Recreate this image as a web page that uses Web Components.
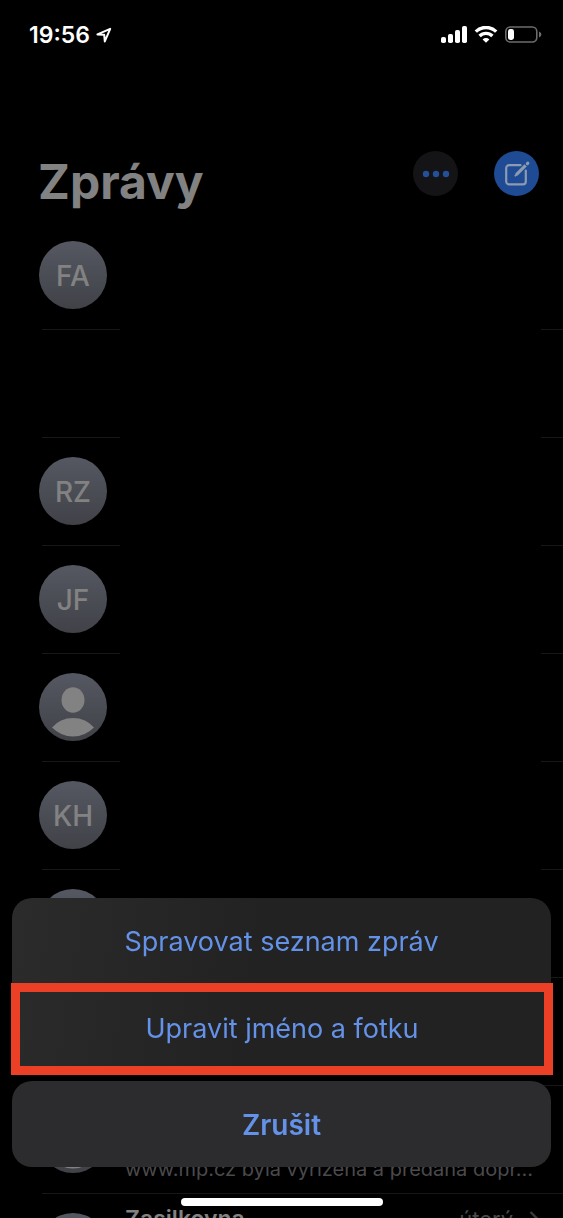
<!DOCTYPE html>
<html lang="cs">
<head>
<meta charset="utf-8">
<meta name="viewport" content="width=device-width, initial-scale=1">
<title>Zprávy</title>
<style>
	body {
		margin: 0;
		background: #000;
		font-family: Inter, "Liberation Sans", sans-serif;
	}
</style>
</head>
<body>
<messages-app>
	<status-bar slot="status" time="19:56"></status-bar>
	<messages-header slot="header">Zprávy</messages-header>

	<message-row initials="FA" masked></message-row>
	<message-row blank masked></message-row>
	<message-row initials="RZ" masked></message-row>
	<message-row initials="JF" masked></message-row>
	<message-row masked></message-row>
	<message-row initials="KH" masked></message-row>
	<message-row masked></message-row>
	<message-row masked></message-row>
	<message-row>
		<span slot="preview">www.mp.cz byla vyřízena a předána dopr…</span>
	</message-row>
	<message-row>
		<span slot="name">Zasilkovna</span>
		<span slot="date">úterý</span>
	</message-row>

	<action-sheet slot="sheet">
		<sheet-action>Spravovat seznam zpráv</sheet-action>
		<sheet-action highlighted>Upravit jméno a fotku</sheet-action>
		<sheet-action slot="cancel" strong>Zrušit</sheet-action>
	</action-sheet>
</messages-app>

<script>
// Shared base: renders a template string into an open shadow root
class BaseElement extends HTMLElement {
	connectedCallback() {
		if (this.shadowRoot) return;
		this.attachShadow({ mode: "open" });
		this.shadowRoot.innerHTML = this.template();
	}
}

class MessagesApp extends BaseElement {
	template() {
		return `
			<style>
				:host {
					display: flex;
					flex-direction: column;
					height: 100vh;
					overflow: hidden;
				}

				main {
					flex: 1;
					min-height: 0;
					overflow: hidden;
				}
			</style>

			<slot name="status"></slot>
			<slot name="header"></slot>
			<main><slot></slot></main>
			<slot name="sheet"></slot>
		`;
	}
}

class StatusBar extends BaseElement {
	template() {
		return `
			<style>
				:host {
					display: flex;
					align-items: center;
					justify-content: space-between;
					height: 69px;
					padding: 0 21px 0 29px;
					color: #fff;
				}

				.group {
					display: flex;
					align-items: center;
					gap: 6px;
				}

				time {
					font-size: 23px;
					font-weight: 600;
				}

				svg {
					display: block;
				}
			</style>

			<div class="group">
				<time>${this.getAttribute("time")}</time>
				<svg width="16" height="16" viewBox="0 0 16 16" fill="none" stroke="#fff" stroke-width="2" stroke-linejoin="round">
					<path d="M14.2 1.8 1.4 7.4 8.2 7.8 8.8 14.4Z"/>
				</svg>
			</div>

			<div class="group">
				<svg width="28" height="18" viewBox="0 0 28 18" fill="#fff">
					<rect x="1" y="11" width="5" height="6" rx="1.8"/>
					<rect x="8" y="8" width="5" height="9" rx="1.8"/>
					<rect x="15" y="4" width="5" height="13" rx="1.8"/>
					<rect x="22" y="0" width="5" height="17" rx="1.8"/>
				</svg>
				<svg width="24" height="18" viewBox="0 0 24 18" fill="none" stroke="#fff" stroke-width="3.4">
					<path d="M1.8 5.6a14.6 14.6 0 0 1 20.4 0"/>
					<path d="M5.6 10a9 9 0 0 1 12.8 0"/>
					<path d="M12 16.8 8.6 13.4a4.8 4.8 0 0 1 6.8 0Z" fill="#fff" stroke="none"/>
				</svg>
				<svg width="38" height="18" viewBox="0 0 38 18">
					<rect x="1.8" y="1" width="31" height="15" rx="4.5" fill="none" stroke="#6c6c6c" stroke-width="1.6"/>
					<rect x="4" y="3" width="6" height="11" rx="2.4" fill="#fff"/>
					<path d="M35 5.6q2.4.8 2.4 2.9t-2.4 2.9Z" fill="#6c6c6c"/>
				</svg>
			</div>
		`;
	}
}

class MessagesHeader extends BaseElement {
	template() {
		return `
			<style>
				:host {
					display: flex;
					align-items: flex-start;
					justify-content: space-between;
					height: 71px;
					padding: 82px 24px 0 38px;
				}

				h1 {
					margin: 0;
					padding-top: 2px;
					font-size: 48px;
					line-height: 58px;
					font-weight: 700;
					color: #828282;
				}

				.buttons {
					display: flex;
					gap: 36px;
				}

				button {
					display: grid;
					place-items: center;
					width: 45px;
					height: 45px;
					padding: 0;
					border: 0;
					border-radius: 50%;
					background: #141416;
				}

				.compose {
					background: #1e4b93;
				}
			</style>

			<h1><slot></slot></h1>
			<div class="buttons">
				<button type="button" aria-label="Další možnosti">
					<svg width="28" height="8" viewBox="0 0 28 8" fill="#235098">
						<circle cx="4" cy="4" r="3.2"/>
						<circle cx="14" cy="4" r="3.2"/>
						<circle cx="24" cy="4" r="3.2"/>
					</svg>
				</button>
				<button type="button" class="compose" aria-label="Nová zpráva">
					<svg width="28" height="28" viewBox="0 0 28 28" fill="none" stroke="#8c9ab2" stroke-linecap="round">
						<path d="M17.5 5.2H6.2A3 3 0 0 0 3.2 8.2V21.4A3 3 0 0 0 6.2 24.4H19.8A3 3 0 0 0 22.8 21.4V10.5" stroke-width="2.2"/>
						<path d="M13.4 14.6 22.6 5.4" stroke-width="3.2" stroke-linecap="butt"/>
						<path d="M24.4 3.6 24.8 3.2" stroke-width="3.2"/>
						<path d="M12.4 15.6 13.8 14.2" stroke-width="2"/>
					</svg>
				</button>
			</div>
		`;
	}
}

class ContactAvatar extends BaseElement {
	template() {
		const initials = this.getAttribute("initials");
		const person = `
			<svg viewBox="0 0 68 68">
				<ellipse cx="34" cy="27" rx="11.5" ry="12.7"/>
				<path d="M13 54.5Q21 45 34 45T55 54.5Q46 63.5 34 63.5T13 54.5Z"/>
			</svg>
		`;

		return `
			<style>
				:host {
					display: grid;
					place-items: center;
					flex: none;
					width: 68px;
					height: 68px;
					border-radius: 50%;
					background: linear-gradient(#555862, #414248);
					color: #828282;
					font-size: 28px;
					font-weight: 500;
				}

				span {
					padding-top: 2px;
				}

				svg {
					display: block;
					width: 68px;
					fill: #828282;
				}
			</style>

			${initials ? `<span>${initials}</span>` : person}
		`;
	}
}

class MessageRow extends BaseElement {
	template() {
		const initials = this.getAttribute("initials") || "";
		const blank = this.hasAttribute("blank");

		return `
			<style>
				:host {
					display: flex;
					flex-direction: column;
					height: 108px;
				}

				.content {
					display: flex;
					align-items: center;
					flex: 1;
					gap: 18px;
					padding: 0 24px 1px 39px;
				}

				.text {
					display: flex;
					flex-direction: column;
					justify-content: space-between;
					flex: 1;
					min-width: 0;
					height: 86px;
					padding-top: 2px;
					font-size: 22px;
					line-height: 28px;
					white-space: nowrap;
					color: #4a4a4c;
				}

				.top {
					display: flex;
					justify-content: space-between;
					min-height: 28px;
				}

				.name {
					font-size: 23px;
					font-weight: 600;
					color: #828282;
				}

				.preview {
					font-size: 20px;
				}

				.date {
					display: flex;
					align-items: center;
					gap: 16px;
				}

				.divider {
					display: flex;
					justify-content: space-between;
					padding-left: 42px;
				}

				.divider i {
					height: 1px;
					background: #171718;
				}

				.divider i:first-child {
					flex: 1;
				}

				:host([masked]) .divider i:first-child {
					flex: none;
					width: 78px;
				}

				:host([masked]) .divider i:last-child {
					width: 22px;
				}
			</style>

			<div class="content">
				${blank ? "" : `<contact-avatar initials="${initials}"></contact-avatar>`}
				${this.hasAttribute("masked") ? "" : `
					<div class="text">
						<div class="top">
							<span class="name"><slot name="name"></slot></span>
							${this.querySelector("[slot=date]") ? `
								<span class="date">
									<slot name="date"></slot>
									<svg width="10" height="16" viewBox="0 0 10 16" fill="none" stroke="#3a3a3c" stroke-width="2.4">
										<path d="M1.5 1 8.5 8 1.5 15"/>
									</svg>
								</span>
							` : ""}
						</div>
						<div class="preview"><slot name="preview"></slot></div>
					</div>
				`}
			</div>
			<div class="divider"><i></i><i></i></div>
		`;
	}
}

class ActionSheet extends BaseElement {
	template() {
		return `
			<style>
				:host {
					position: fixed;
					inset: auto 0 0;
					display: flex;
					flex-direction: column;
					padding: 0 12px 12px;
				}

				.group {
					margin-bottom: 6px;
					border-radius: 20px 20px 0 0;
					background: linear-gradient(100deg, #2b2b2c, #222 45%);
				}

				.cancel {
					border-radius: 20px;
					background: #2c2c2e;
				}

				.home-indicator {
					align-self: center;
					width: 202px;
					height: 8px;
					margin-top: 31px;
					border-radius: 4px;
					background: #fff;
				}
			</style>

			<div class="group"><slot></slot></div>
			<div class="cancel"><slot name="cancel"></slot></div>
			<div class="home-indicator"></div>
		`;
	}
}

class SheetAction extends BaseElement {
	template() {
		return `
			<style>
				:host {
					display: block;
				}

				button {
					display: block;
					width: 100%;
					height: 85px;
					padding: 2px 0 0;
					border: 0;
					background: none;
					color: #6492e8;
					font-family: inherit;
					font-size: 27px;
					font-weight: 400;
				}

				:host([highlighted]) {
					margin: 0 -2px 0 -1px;
				}

				:host([highlighted]) button {
					height: 92px;
					padding: 0 0 2px;
					border: 9px solid #eb4026;
				}

				:host([strong]) button {
					height: 86px;
					font-size: 28px;
					font-weight: 600;
				}
			</style>

			<button type="button"><slot></slot></button>
		`;
	}
}

customElements.define("contact-avatar", ContactAvatar);
customElements.define("message-row", MessageRow);
customElements.define("status-bar", StatusBar);
customElements.define("messages-header", MessagesHeader);
customElements.define("sheet-action", SheetAction);
customElements.define("action-sheet", ActionSheet);
customElements.define("messages-app", MessagesApp);
</script>
</body>
</html>
